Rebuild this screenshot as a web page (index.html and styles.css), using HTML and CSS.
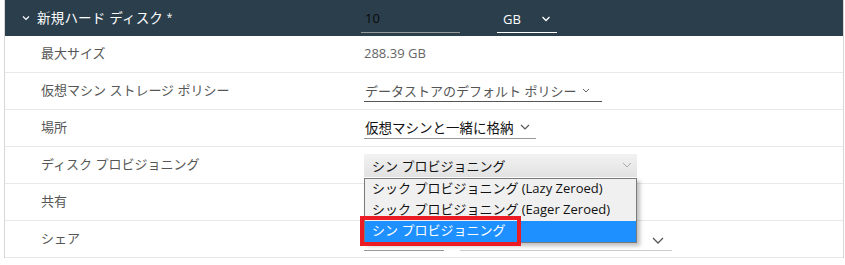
FILE: index.html
```html
<!DOCTYPE html>
<html lang="ja">

<head>
	<meta charset="UTF-8">
	<meta name="viewport" content="width=device-width, initial-scale=1.0">
	<title>新規ハード ディスク</title>

	<link rel="stylesheet" href="styles.css">
</head>

<body>
	<div class="panel">
		<header class="header">
			<svg class="header-caret" width="8" height="6" viewBox="0 0 8 6">
				<path d="M1 1.5 L4 4.5 L7 1.5" fill="none" stroke="#fff" stroke-width="1.2" />
			</svg>
			<span class="header-title">新規ハード ディスク <span class="star">*</span></span>
			<span class="size-input">10</span>
			<span class="unit-select">
				GB
				<svg width="10" height="6" viewBox="0 0 10 6">
					<path d="M1.5 1 L5 4.5 L8.5 1" fill="none" stroke="#fff" stroke-width="1.3" />
				</svg>
			</span>
		</header>

		<section class="rows">
			<div class="row">
				<span class="label">最大サイズ</span>
				<span class="value">288.39 GB</span>
			</div>

			<div class="row">
				<span class="label">仮想マシン ストレージ ポリシー</span>
				<span class="line-select dark">
					データストアのデフォルト ポリシー
					<svg width="8" height="5" viewBox="0 0 8 5">
						<path d="M1 1 L4 4 L7 1" fill="none" stroke="#666" stroke-width="1" />
					</svg>
				</span>
			</div>

			<div class="row">
				<span class="label">場所</span>
				<span class="line-select">
					仮想マシンと一緒に格納
					<svg width="10" height="6" viewBox="0 0 10 6">
						<path d="M1 1 L5 5 L9 1" fill="none" stroke="#555" stroke-width="1.2" />
					</svg>
				</span>
			</div>

			<div class="row">
				<span class="label">ディスク プロビジョニング</span>
				<div class="combo">
					<div class="combo-box">
						シン プロビジョニング
						<svg width="10" height="6" viewBox="0 0 10 6">
							<path d="M1 1 L5 5 L9 1" fill="none" stroke="#aaa" stroke-width="1" />
						</svg>
					</div>
					<ul class="combo-list">
						<li>シック プロビジョニング (Lazy Zeroed)</li>
						<li>シック プロビジョニング (Eager Zeroed)</li>
						<li class="selected">シン プロビジョニング</li>
					</ul>
					<div class="highlight"></div>
				</div>
			</div>

			<div class="row">
				<span class="label">共有</span>
				<span class="value"></span>
			</div>

			<div class="row">
				<span class="label">シェア</span>
				<span class="share-fields">
					<span class="share-level"></span>
					<span class="share-value">
						<svg width="12" height="7" viewBox="0 0 12 7">
							<path d="M1 1 L6 6 L11 1" fill="none" stroke="#555" stroke-width="1.3" />
						</svg>
					</span>
				</span>
			</div>
		</section>
	</div>
</body>

</html>
```

FILE: styles.css
```css
*,
*::before,
*::after {
	margin: 0;
	padding: 0;
	box-sizing: border-box;

	--header-color: #2b3e4c;
	--line-color: #e8e8e8;
	--label-color: #565656;
	--blue-color: #1e90ff;
	--mark-color: #ed1c24;
}

body {
	background-color: #fff;
	font-family: "Open Sans", "Noto Sans CJK JP", sans-serif;
	font-size: 13px;
	color: #222;
}

.panel {
	width: 840px;
	margin-left: 4px;

	border-left: 1px solid #d6d6d6;
	border-right: 1px solid #d6d6d6;
}

.header {
	height: 36px;

	display: flex;
	align-items: center;

	background-color: var(--header-color);
	color: #fff;
}

.header-caret {
	margin-left: 17px;
	margin-right: 7px;
}

.header-title {
	width: 324px;
	margin-bottom: 2px;
	font-size: 13.5px;
	letter-spacing: 0.2px;
}

.header-title .star {
	position: relative;
	top: -2px;
	font-size: 10px;
}

.size-input {
	width: 99px;
	height: 30px;
	padding: 1px 0 0 4px;

	display: flex;
	align-items: center;

	border-bottom: 1px solid #999;
	color: #0a0a0a;
	font-size: 13px;
}

.unit-select {
	width: 60px;
	height: 30px;
	margin-left: 37px;
	padding: 2px 6px 0 6px;

	display: flex;
	align-items: center;
	justify-content: space-between;

	border-bottom: 1px solid #fff;
	font-size: 13px;
}

.row {
	height: 37px;
	padding-left: 36px;

	display: grid;
	grid-template-columns: 323px 1fr;
	align-items: center;

	border-bottom: 1px solid var(--line-color);
}

.label,
.value {
	margin-bottom: 3px;
}

.label {
	color: var(--label-color);
}

.value {
	color: #666;
}

.line-select {
	height: 22px;
	justify-self: start;
	padding: 0 6px 1px 1px;

	display: inline-flex;
	align-items: center;
	gap: 6px;

	border-bottom: 1px solid #999;
	color: #111;
	font-size: 13.5px;
}

.line-select.dark {
	gap: 6px;
	padding-right: 12px;
	border-bottom-color: #555;
	color: #555;
	font-size: 13px;
}

.combo {
	width: 273px;
	height: 23px;
	position: relative;
	margin-top: 1px;
}

.combo-box {
	height: 100%;
	padding: 0 5px 1px 8px;

	display: flex;
	align-items: center;
	justify-content: space-between;

	background: linear-gradient(#f2f2f2, #e2e2e2);
	color: #111;
}

.combo-list {
	position: absolute;
	top: 24px;
	left: 0;
	width: 273px;
	z-index: 2;

	list-style: none;
	border: 1px solid #7a7a7a;
	background-color: #f0f0f0;
	box-shadow: 3px 3px 4px rgba(0, 0, 0, 0.25);
}

.combo-list li {
	height: 21px;
	padding-left: 7px;
	line-height: 19px;
	color: #111;
}

.combo-list li.selected {
	background-color: var(--blue-color);
	color: #fff;
}

.highlight {
	position: absolute;
	top: 62px;
	left: -4px;
	width: 161px;
	height: 30px;
	z-index: 3;

	border: 4px solid var(--mark-color);
}

.share-fields {
	display: flex;
	gap: 16px;
	align-self: end;
	margin-bottom: 6px;
}

.share-level {
	width: 80px;
	height: 20px;
	border-bottom: 1px solid #999;
}

.share-value {
	width: 212px;
	height: 20px;
	padding-right: 8px;

	display: flex;
	justify-content: flex-end;
	align-items: center;

	border-bottom: 1px solid #ccc;
}
```
